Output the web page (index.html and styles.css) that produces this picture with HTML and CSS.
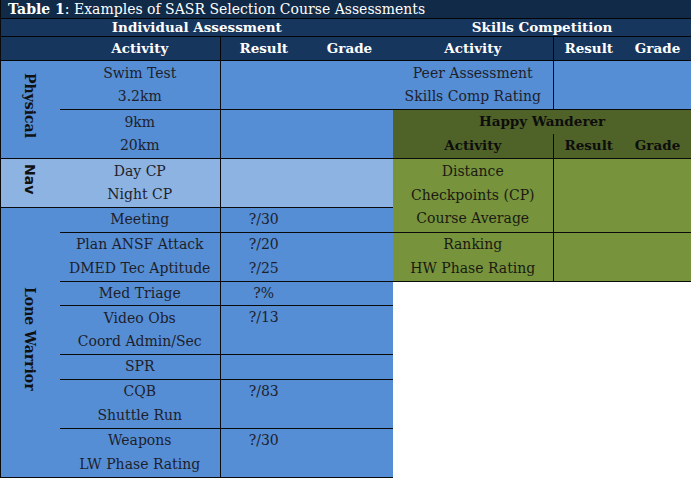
FILE: index.html
```html
<!DOCTYPE html>
<html>
<head>
<meta charset="utf-8">
<title>Table 1</title>
<link rel="stylesheet" href="styles.css">
</head>
<body>
<table class="assess">
  <colgroup>
    <col class="c-lab"><col class="c-act"><col class="c-res"><col class="c-grd">
    <col class="c-act2"><col class="c-res2"><col class="c-grd2">
  </colgroup>
  <tr class="title-row">
    <th colspan="7" class="title"><b>Table 1</b>: Examples of SASR Selection Course Assessments</th>
  </tr>
  <tr class="group-row">
    <th colspan="4">Individual Assessment</th>
    <th colspan="3">Skills Competition</th>
  </tr>
  <tr class="head-row">
    <th class="h-lab"></th>
    <th class="h-act">Activity</th>
    <th>Result</th>
    <th>Grade</th>
    <th class="h-act">Activity</th>
    <th>Result</th>
    <th>Grade</th>
  </tr>
  <!-- 1 -->
  <tr class="b">
    <td rowspan="4" class="lab"><span class="vert">Physical</span></td>
    <td rowspan="2" class="act">Swim Test<br>3.2km</td>
    <td rowspan="2" class="res"></td>
    <td rowspan="2" class="grd"></td>
    <td rowspan="2" class="act sk">Peer Assessment<br>Skills Comp Rating</td>
    <td rowspan="2" class="res sk"></td>
    <td rowspan="2" class="grd sk"></td>
  </tr>
  <tr class="b"></tr>
  <!-- 3 -->
  <tr class="b">
    <td rowspan="2" class="act">9km<br>20km</td>
    <td rowspan="2" class="res"></td>
    <td rowspan="2" class="grd"></td>
    <td colspan="3" class="hw-title">Happy Wanderer</td>
  </tr>
  <tr class="b">
    <td class="hw-head act">Activity</td>
    <td class="hw-head">Result</td>
    <td class="hw-head">Grade</td>
  </tr>
  <!-- 5 -->
  <tr class="b">
    <td rowspan="2" class="lab nav"><span class="vert nav-text">Nav</span></td>
    <td rowspan="2" class="act nav">Day CP<br>Night CP</td>
    <td rowspan="2" class="res nav"></td>
    <td rowspan="2" class="grd nav"></td>
    <td rowspan="3" class="act hw">Distance<br>Checkpoints (CP)<br>Course Average</td>
    <td rowspan="3" class="res hw"></td>
    <td rowspan="3" class="grd hw"></td>
  </tr>
  <tr class="b"></tr>
  <!-- 7 -->
  <tr class="b">
    <td rowspan="11" class="lab"><span class="vert">Lone Warrior</span></td>
    <td class="act">Meeting</td>
    <td class="res">?/30</td>
    <td class="grd"></td>
  </tr>
  <!-- 8 -->
  <tr class="b">
    <td rowspan="2" class="act">Plan ANSF Attack<br>DMED Tec Aptitude</td>
    <td rowspan="2" class="res">?/20<br>?/25</td>
    <td rowspan="2" class="grd"></td>
    <td rowspan="2" class="act hw">Ranking<br>HW Phase Rating</td>
    <td rowspan="2" class="res hw"></td>
    <td rowspan="2" class="grd hw"></td>
  </tr>
  <tr class="b"></tr>
  <!-- 10 -->
  <tr class="b">
    <td class="act">Med Triage</td>
    <td class="res">?%</td>
    <td class="grd"></td>
    <td colspan="3" rowspan="8" class="blank"></td>
  </tr>
  <!-- 11 -->
  <tr class="b">
    <td rowspan="2" class="act">Video Obs<br>Coord Admin/Sec</td>
    <td rowspan="2" class="res top">?/13</td>
    <td rowspan="2" class="grd"></td>
  </tr>
  <tr class="b"></tr>
  <!-- 13 -->
  <tr class="b">
    <td class="act">SPR</td>
    <td class="res"></td>
    <td class="grd"></td>
  </tr>
  <!-- 14 -->
  <tr class="b">
    <td rowspan="2" class="act">CQB<br>Shuttle Run</td>
    <td rowspan="2" class="res top">?/83</td>
    <td rowspan="2" class="grd"></td>
  </tr>
  <tr class="b"></tr>
  <!-- 16 -->
  <tr class="b">
    <td rowspan="2" class="act">Weapons<br>LW Phase Rating</td>
    <td rowspan="2" class="res top">?/30</td>
    <td rowspan="2" class="grd"></td>
  </tr>
  <tr class="b"></tr>
</table>
</body>
</html>
```

FILE: styles.css
```css
html, body {
  margin: 0;
  padding: 0;
  background: #ffffff;
}

.assess {
  border-collapse: collapse;
  table-layout: fixed;
  width: 691px;
  font-family: "DejaVu Serif", "Liberation Serif", serif;
  font-size: 14px;
  color: #1e1e2c;
  border-left: 1px solid #0a0a0a;
}

.c-lab { width: 59px; }
.c-act { width: 161px; }
.c-res { width: 86px; }
.c-grd { width: 86px; }
.c-act2 { width: 161px; }
.c-res2 { width: 70px; }
.c-grd2 { width: 68px; }

th, td {
  padding: 0;
  text-align: center;
}

/* title bar */
.title-row th {
  height: 18px;
  line-height: 18px;
  background: #112a47;
  color: #ffffff;
  font-weight: normal;
  font-size: 14px;
  text-align: left;
  padding-left: 7px;
  border-bottom: 1px solid #050505;
  white-space: nowrap;
}

.title-row b {
  font-weight: bold;
}

.group-row th {
  height: 17px;
  line-height: 17px;
  background: #17365d;
  color: #ffffff;
  font-weight: bold;
  font-size: 13.5px;
  border-bottom: 1px solid #050505;
}

.head-row th {
  height: 23px;
  line-height: 23px;
  background: #17365d;
  color: #ffffff;
  font-weight: bold;
  font-size: 13.5px;
  border-bottom: 1px solid #050505;
}

.head-row .h-act {
  border-right: 1px solid #050505;
}

/* body */
.b {
  height: 24.5px;
}

.b td {
  line-height: 23.5px;
  background: #558ed5;
  vertical-align: middle;
}

.b td.top {
  vertical-align: top;
}

.lab {
  border-bottom: 1px solid #0a0a0a;
}

.act {
  border-bottom: 1px solid #0a0a0a;
  border-right: 1px solid #0a0a0a;
}

.res, .grd {
  border-bottom: 1px solid #0a0a0a;
}

.b td.nav {
  background: #8db3e2;
}

.vert {
  display: inline-block;
  writing-mode: vertical-rl;
  font-weight: bold;
  font-size: 14px;
  color: #111111;
  line-height: 1;
}

.nav-text {
  font-family: "DejaVu Sans", "Liberation Sans", sans-serif;
}

/* Happy Wanderer */
.b td.hw-title {
  background: #4f6228;
  color: #0d0d0d;
  font-weight: bold;
  font-size: 13.5px;
}

.b td.hw-head {
  background: #4f6228;
  color: #0d0d0d;
  font-weight: bold;
  font-size: 13.5px;
  border-bottom: 1px solid #0a0a0a;
}

.b td.hw-head.act {
  border-right: 1px solid #0a0a0a;
}

.b td.hw {
  background: #77933c;
  color: #1a1a12;
}

.b td.blank {
  background: #ffffff;
  border: none;
}
```
